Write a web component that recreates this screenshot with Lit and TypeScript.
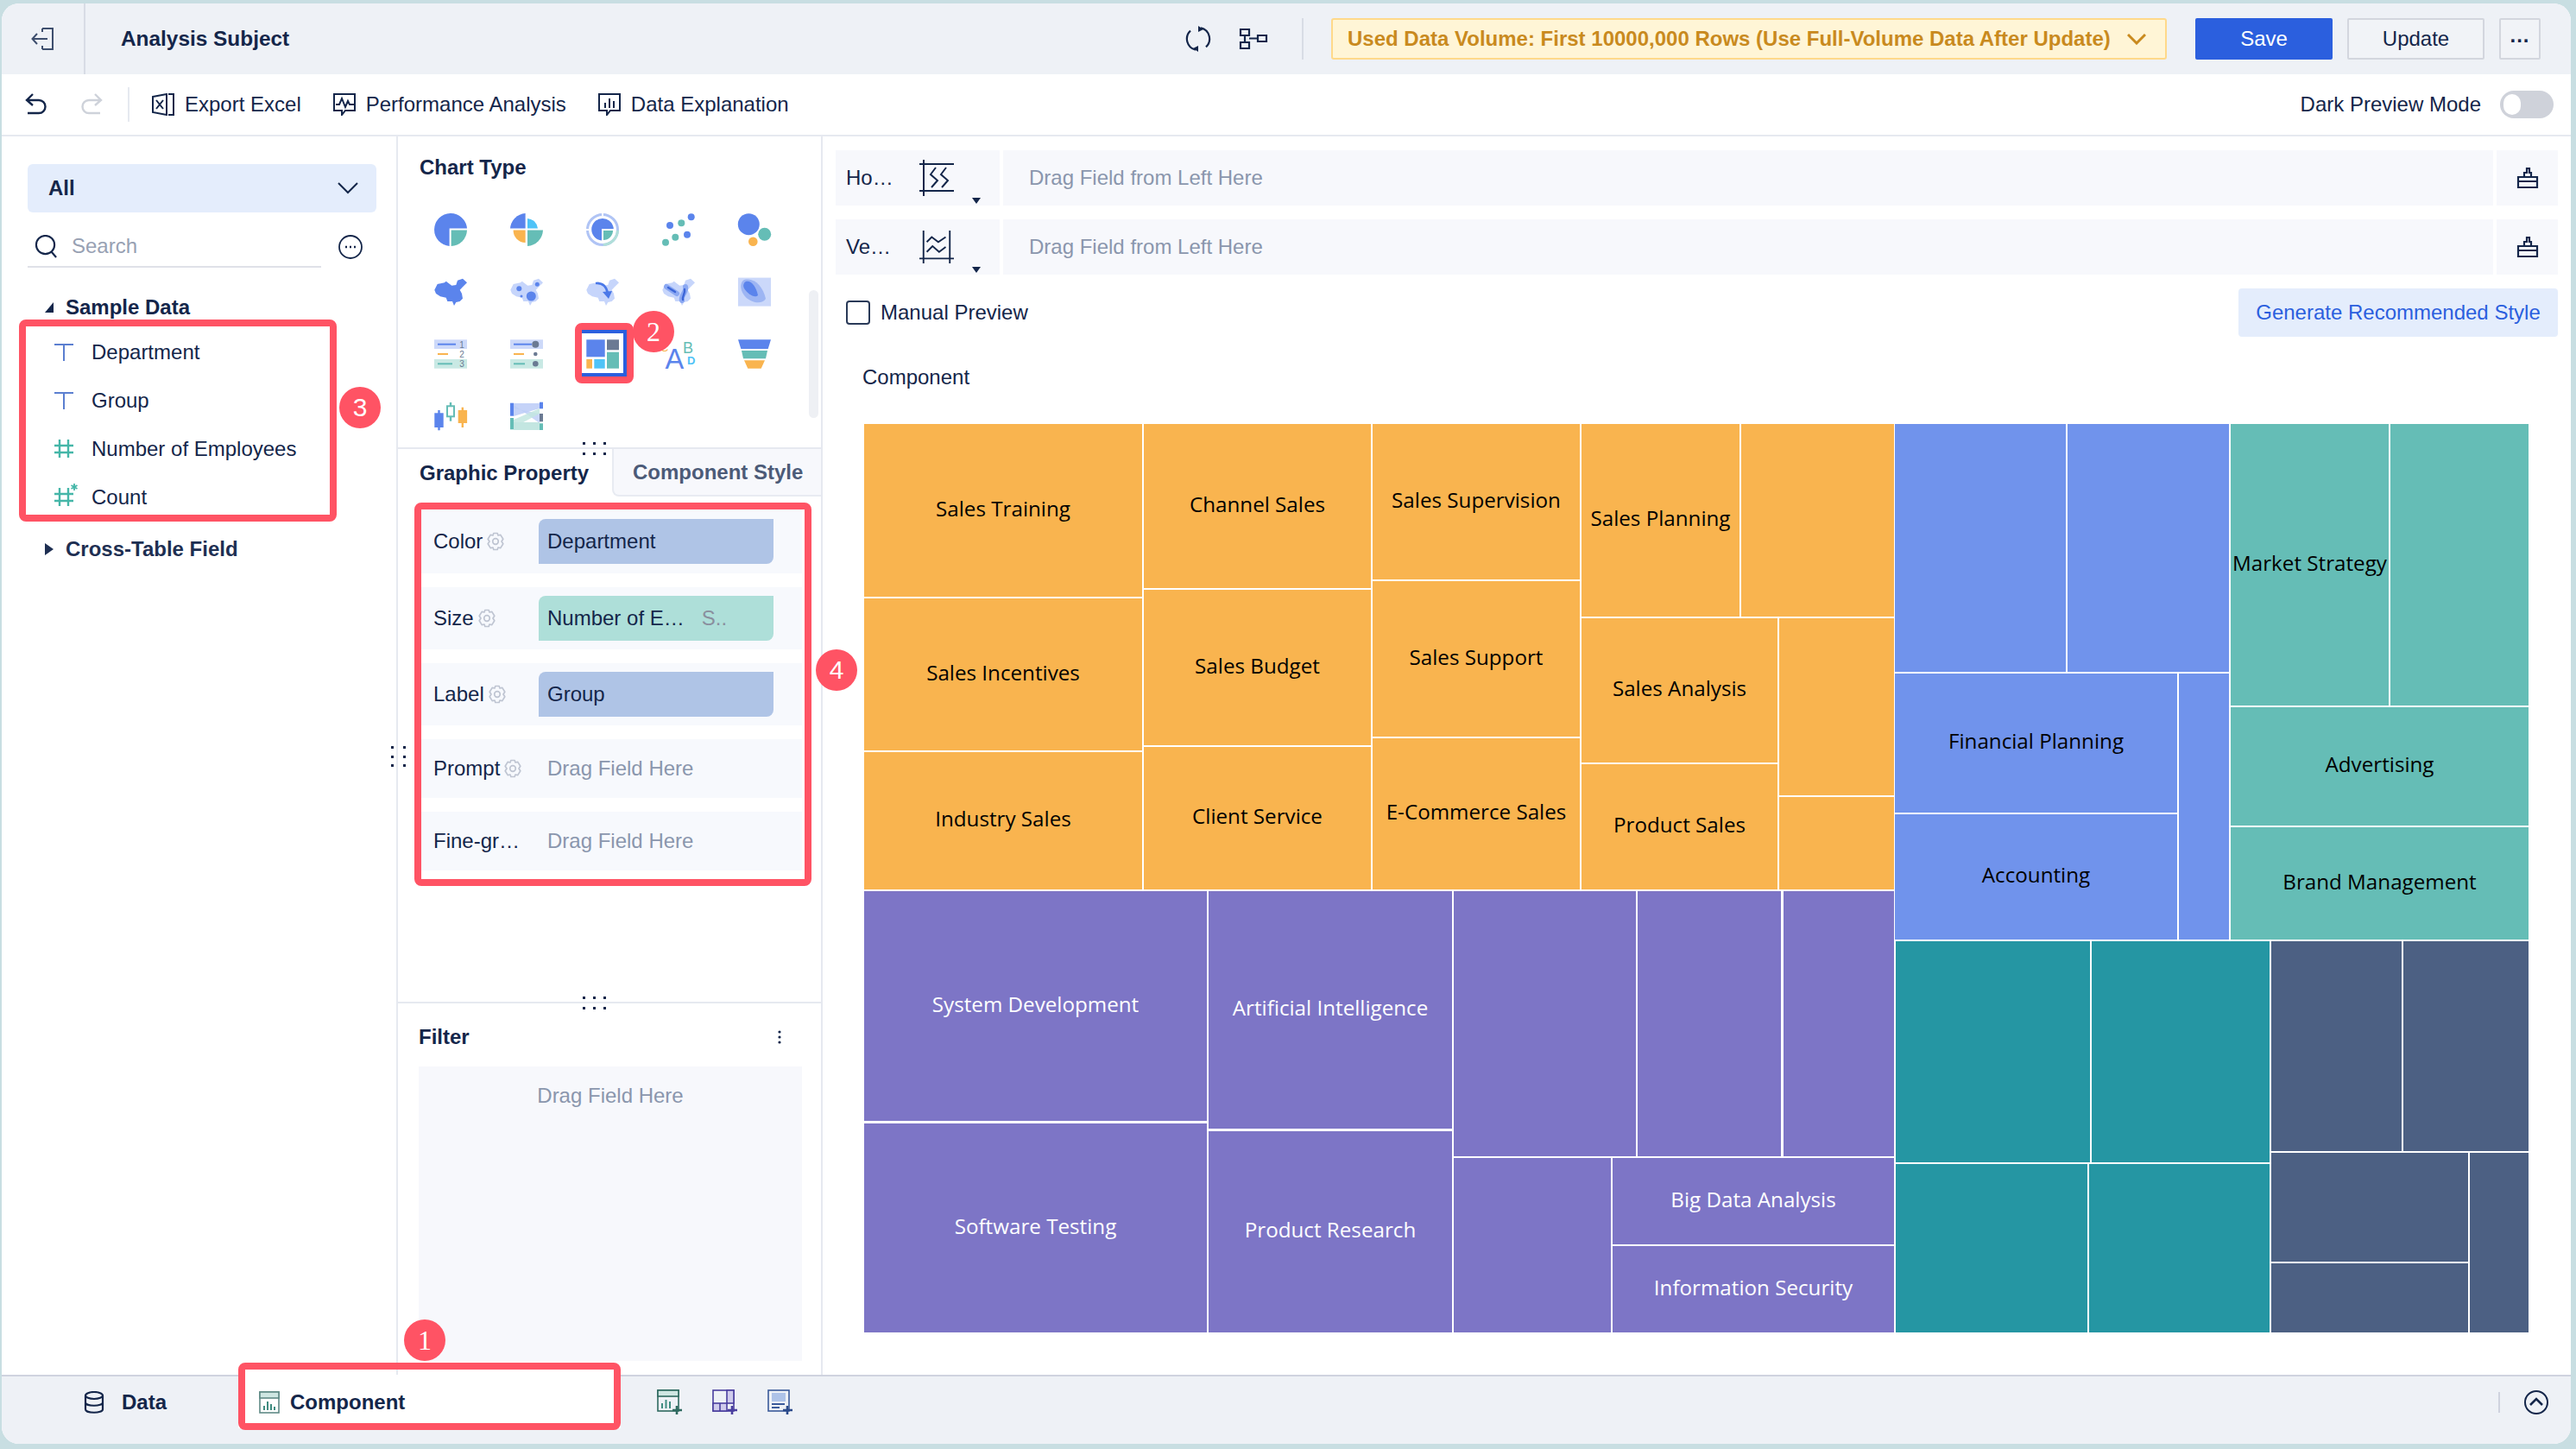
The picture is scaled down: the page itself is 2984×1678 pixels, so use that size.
import { LitElement, html, svg, css } from 'lit';
import { customElement } from 'lit/decorators.js';

type Cell = [number, number, number, number, string?];

const BLUE = '#5b84ec';
const GREEN = '#65bdb6';
const ORANGE = '#f9b44f';
const SKY = '#4fc3f7';
const PALE = '#c6d5fb';
const SLATE = '#6b7a93';
const CHINA =
  'M1.3 17.7 L4.7 11 13 9.3 14.7 7.7 21.3 12.7 26.3 12 28 6.7 34 4.7 39 9.3 34 14.3 30.7 17.7 33 22 34 27.7 30.7 31 26.3 32 24 36 22 31 16.3 31 14.7 26.7 8 25.3 3 22Z';

// x0, y0, x1, y1 in page pixels, the chart's viewBox uses the same numbers
const GROUPS: { fill: string; text: string; cells: Cell[] }[] = [
  {
    fill: '#f9b44f',
    text: '#000',
    cells: [
      [1001, 491, 1323, 691, 'Sales Training'],
      [1001, 693, 1323, 869, 'Sales Incentives'],
      [1001, 871, 1323, 1030, 'Industry Sales'],
      [1325, 491, 1588, 681, 'Channel Sales'],
      [1325, 683, 1588, 863, 'Sales Budget'],
      [1325, 865, 1588, 1030, 'Client Service'],
      [1590, 491, 1830, 671, 'Sales Supervision'],
      [1590, 673, 1830, 853, 'Sales Support'],
      [1590, 855, 1830, 1030, 'E-Commerce Sales'],
      [1832, 491, 2015, 714, 'Sales Planning'],
      [2017, 491, 2194, 714],
      [1832, 716, 2059, 883, 'Sales Analysis'],
      [1832, 885, 2059, 1030, 'Product Sales'],
      [2061, 716, 2194, 921],
      [2061, 923, 2194, 1030],
    ],
  },
  {
    fill: '#7d75c6',
    text: '#fff',
    cells: [
      [1001, 1032, 1398, 1298, 'System Development'],
      [1001, 1301, 1398, 1543, 'Software Testing'],
      [1400, 1032, 1682, 1307, 'Artificial Intelligence'],
      [1400, 1310, 1682, 1543, 'Product Research'],
      [1684, 1032, 1895, 1339],
      [1897, 1032, 2063, 1339],
      [2066, 1032, 2194, 1339],
      [1684, 1341, 1866, 1543],
      [1868, 1341, 2194, 1441, 'Big Data Analysis'],
      [1868, 1443, 2194, 1543, 'Information Security'],
    ],
  },
  {
    fill: '#7093ec',
    text: '#000',
    cells: [
      [2195, 491, 2393, 778],
      [2395, 491, 2582, 778],
      [2195, 780, 2522, 941, 'Financial Planning'],
      [2195, 943, 2522, 1088, 'Accounting'],
      [2524, 780, 2582, 1088],
    ],
  },
  {
    fill: '#65bdb6',
    text: '#000',
    cells: [
      [2584, 491, 2767, 817, 'Market Strategy'],
      [2769, 491, 2929, 817],
      [2584, 819, 2929, 956, 'Advertising'],
      [2584, 958, 2929, 1088, 'Brand Management'],
    ],
  },
  {
    fill: '#2596a3',
    text: '#fff',
    cells: [
      [2196, 1090, 2421, 1346],
      [2423, 1090, 2629, 1346],
      [2196, 1348, 2418, 1543],
      [2420, 1348, 2629, 1543],
    ],
  },
  {
    fill: '#4c6083',
    text: '#fff',
    cells: [
      [2631, 1090, 2782, 1333],
      [2784, 1090, 2929, 1333],
      [2631, 1335, 2859, 1461],
      [2631, 1463, 2859, 1543],
      [2861, 1335, 2929, 1543],
    ],
  },
];

const CHART_ICONS = [
  svg`<path d="M18.6 39 A19 19 0 1 1 39 18.6 H18.6Z" fill=${BLUE}/><path d="M20.6 20.6 H39 A19 19 0 0 1 20.6 39Z" fill=${GREEN}/>`,
  svg`<path d="M18.6 18.6 H1 A19 19 0 0 1 18.6 1Z" fill=${BLUE}/><path d="M21 18.6 V7 A13 13 0 0 1 33 18.6Z" fill=${SKY}/><path d="M18.6 20.6 V35 A14 14 0 0 1 4.6 20.6Z" fill=${ORANGE}/><path d="M21 20.6 H39 A19 19 0 0 1 21 39Z" fill=${GREEN}/>`,
  svg`<circle cx="20" cy="20" r="17.5" fill="none" stroke="#b0c4f5" stroke-width="3"/><path d="M20.8 37.5 A17.5 17.5 0 0 0 37.5 20.8" fill="none" stroke="#b0dfd9" stroke-width="3"/><path d="M19 1 h2 v3 h-2Z M1 19 h3 v2 h-3Z" fill="#fff"/><path d="M19 32.5 A12.8 12.8 0 1 1 32.8 19 H19Z" fill=${BLUE}/><path d="M21 21 H32 A11 11 0 0 1 21 32Z" fill=${GREEN}/>`,
  svg`<circle cx="34.7" cy="5.3" r="4" fill=${BLUE}/><circle cx="23.3" cy="12.3" r="4" fill=${GREEN}/><circle cx="10" cy="15" r="4" fill=${BLUE}/><circle cx="16.3" cy="28.7" r="4" fill=${GREEN}/><circle cx="30" cy="25.7" r="4" fill=${BLUE}/><circle cx="5" cy="34.7" r="4" fill=${GREEN}/>`,
  svg`<circle cx="13.3" cy="13.7" r="12.5" fill=${BLUE}/><circle cx="31.7" cy="25.3" r="7.5" fill=${GREEN}/><circle cx="18.3" cy="33.7" r="5.3" fill=${ORANGE}/>`,
  svg`<path d=${CHINA} fill=${BLUE}/>`,
  svg`<path d=${CHINA} fill=${PALE}/><circle cx="11.3" cy="16.3" r="3" fill=${BLUE}/><circle cx="32.3" cy="11.3" r="2.5" fill=${BLUE}/><circle cx="25.3" cy="25" r="5.5" fill=${BLUE}/><circle cx="14" cy="25" r="1.5" fill=${BLUE}/>`,
  svg`<path d=${CHINA} fill=${PALE}/><path d="M12 10 Q24 9 26 22" fill="none" stroke="#4a78e8" stroke-width="2.6"/><path d="M20 20 L27 28 L31 19Z" fill="#4a78e8"/>`,
  svg`<path d=${CHINA} fill=${PALE}/><path d="M6 14 L18 22 M28 14 C30 20 22 24 24 30" fill="none" stroke="#8ba8f2" stroke-width="6" stroke-linecap="round"/><path d="M8 15 L16 20 M27 17 C28 22 24 25 25 29" fill="none" stroke="#3c66d8" stroke-width="2.4" stroke-linecap="round"/>`,
  svg`<rect x="1" y="3.6" width="38" height="33" fill="#cbd8fa"/><path d="M8 6 C20 3 30 14 33 28 C28 36 14 32 8 24 C2 16 4 8 8 6Z" fill="#9db5f3"/><path d="M10 8 C16 6 22 14 24 24 C20 28 12 22 8 16 C6 12 8 9 10 8Z" fill=${BLUE}/>`,
  svg`<rect x="1" y="3.3" width="38" height="10.7" fill="#cdd9f9"/><rect x="1" y="26" width="38" height="10.7" fill="#c9e9e4"/><path d="M5 8.7 H26" stroke=${BLUE} stroke-width="2"/><path d="M5 20 H17" stroke=${ORANGE} stroke-width="2"/><path d="M5 31.3 H22" stroke=${GREEN} stroke-width="2"/><g fill=${SLATE} font-family="Liberation Sans, sans-serif" font-size="10" text-anchor="middle"><text x="33" y="12.5">1</text><text x="33" y="23.8">2</text><text x="33" y="35">3</text></g>`,
  svg`<rect x="1" y="3.3" width="38" height="10.7" fill="#cdd9f9"/><rect x="1" y="26" width="38" height="10.7" fill="#c9e9e4"/><path d="M5 8.7 H26" stroke=${BLUE} stroke-width="2"/><path d="M5 20 H17" stroke=${ORANGE} stroke-width="2"/><path d="M5 31.3 H18" stroke=${GREEN} stroke-width="2"/><circle cx="30.3" cy="8.7" r="4" fill=${SLATE}/><circle cx="30.3" cy="20" r="2.3" fill=${SLATE}/><circle cx="30.3" cy="31.3" r="3.3" fill=${SLATE}/>`,
  svg`<rect x="1.3" y="3.3" width="21.4" height="20" fill=${BLUE}/><rect x="25" y="3.3" width="14" height="12" fill=${SLATE}/><rect x="25" y="17.7" width="14" height="19" fill=${GREEN}/><rect x="1.3" y="26" width="6.7" height="10.7" fill=${ORANGE}/><rect x="10.3" y="26" width="12.4" height="10.7" fill=${SKY}/>`,
  svg`<g font-family="Liberation Sans, sans-serif"><text x="-1" y="17" font-size="13" fill=${ORANGE}>C</text><text x="4.5" y="36.7" font-size="32.5" fill=${BLUE}>A</text><text x="25" y="18.5" font-size="18" fill=${GREEN}>B</text><text x="30" y="32" font-size="13" font-weight="700" fill=${SKY}>D</text></g>`,
  svg`<path d="M1 3.3 H39 L35.7 14 H4.3Z" fill=${BLUE}/><path d="M5 16 H35 L33 25.3 H7Z" fill=${GREEN}/><path d="M8 27.3 H32 L27.7 36.7 H12.3Z" fill=${ORANGE}/>`,
  svg`<path d="M6.5 13 V36.3" stroke=${BLUE} stroke-width="2.4"/><rect x="1.3" y="16.3" width="10.4" height="16.7" fill=${BLUE}/><path d="M20 4 V25.7" stroke=${GREEN} stroke-width="2.4"/><rect x="16" y="8.3" width="8" height="12" fill="#fff" stroke=${GREEN} stroke-width="2"/><path d="M33.8 9.7 V33" stroke=${ORANGE} stroke-width="2.4"/><rect x="28.7" y="13" width="10.4" height="15" fill=${ORANGE}/>`,
  svg`<path d="M5 5 H35 V11 L5 20Z" fill="#c5d3f8"/><path d="M5 7 L35 28 V17 L5 11Z" fill="#bccdf6" opacity=".8"/><path d="M5 24 L35 11 V17 L5 33Z" fill="#c3e6e1" opacity=".85"/><path d="M5 27 H35 V36 H5Z" fill="#c3e6e1"/><rect x="1" y="4.7" width="4" height="15" fill=${BLUE}/><rect x="1" y="22" width="4" height="13.3" fill=${GREEN}/><rect x="35" y="3.7" width="4" height="7.6" fill=${BLUE}/><rect x="35" y="17" width="4" height="9.3" fill=${SLATE}/><rect x="35" y="28.3" width="4" height="7.7" fill=${GREEN}/>`,
];

const gear = html`<svg class="gear" viewBox="0 0 20 22" width="20" height="22" fill="none" stroke="#bfc5d2" stroke-width="1.7" stroke-linejoin="round">
  <path d="M7.800 1.500 H12.200 L13 4 L15.800 3.400 L18.800 8.200 L17 11 L18.800 13.800 L15.800 18.600 L13 18 L12.200 20.500 H7.800 L7 18 L4.200 18.600 L1.200 13.800 L3 11 L1.200 8.200 L4.200 3.400 L7 4Z"/>
  <circle cx="10" cy="11" r="3.300"/>
</svg>`;

const slotIcon = html`<svg class="slot-end" viewBox="0 0 26 26" width="26" height="26" fill="none" stroke="#14264a" stroke-width="2.2">
  <path d="M2 12 H24 V24 H2Z M2 17 H24 M9 12 V7 H12 V2 H15 V7 H17 V12"/>
</svg>`;

@customElement('app-root')
export class AppRoot extends LitElement {
  static styles = css`
    :host {
      display: block;
      font-family: 'Liberation Sans', Arial, sans-serif;
      font-size: 24px;
      color: #14264a;
    }

    .page {
      position: relative;
      width: 2984px;
      height: 1678px;
      padding: 4px 6px 6px 2px;
      box-sizing: border-box;
      background: #c8dee2;
      overflow: hidden;
    }

    .window {
      display: flex;
      flex-direction: column;
      height: 100%;
      background: #fff;
      border-radius: 20px;
      overflow: hidden;
    }

    svg {
      display: block;
      flex: none;
    }

    /* title bar */
    .titlebar {
      display: flex;
      align-items: center;
      height: 82px;
      flex: none;
      padding-right: 35px;
      background: #eef1f6;
    }

    .back {
      display: flex;
      align-items: center;
      justify-content: center;
      align-self: stretch;
      width: 97px;
      margin-right: 41px;
      padding-right: 1px;
      box-sizing: border-box;
      border-right: 2px solid #d8dce5;
    }

    .title {
      flex: 1;
      font-size: 24.4px;
      font-weight: 700;
    }

    .title-icons {
      display: flex;
      align-items: center;
      gap: 32px;
    }

    .vsep {
      width: 2px;
      height: 48px;
      margin: 0 32px 0 39px;
      background: #d8dce5;
    }

    .volume {
      display: flex;
      align-items: center;
      justify-content: space-between;
      width: 968px;
      height: 48px;
      padding: 0 22px 0 17px;
      box-sizing: border-box;
      margin-right: 33px;
      border: 2px solid #ffd98a;
      border-radius: 3px;
      background: #fff5d6;
      color: #c98a1e;
      font-weight: 700;
      white-space: nowrap;
    }

    .btn {
      display: flex;
      align-items: center;
      justify-content: center;
      width: 159px;
      height: 48px;
      box-sizing: border-box;
      border: 2px solid #d3d6de;
      border-radius: 2px;
      background: #f1f3f7;
    }

    .btn.primary {
      border-color: #2b5fde;
      background: #2b5fde;
      color: #fff;
      margin-right: 17px;
    }

    .btn.more {
      width: 48px;
      margin-left: 17px;
      letter-spacing: 1px;
      font-weight: 700;
      padding-bottom: 8px;
    }

    /* toolbar */
    .toolbar {
      display: flex;
      align-items: center;
      height: 70px;
      flex: none;
      padding: 0 20px 0 27px;
      border-bottom: 2px solid #e6e9f0;
    }

    .hist {
      display: flex;
      gap: 40px;
      padding-right: 29px;
      margin-right: 26px;
      height: 40px;
      align-items: center;
      border-right: 2px solid #e6e9f0;
    }

    .tool {
      display: flex;
      align-items: center;
      gap: 12px;
      margin-right: 37px;
    }

    .spacer {
      flex: 1;
    }

    .toggle {
      width: 62px;
      height: 32px;
      margin-left: 22px;
      padding: 4px;
      box-sizing: border-box;
      border-radius: 16px;
      background: #cfd2da;
    }

    .toggle i {
      display: block;
      width: 20px;
      height: 24px;
      border-radius: 12px;
      background: #fff;
    }

    /* panels */
    .body {
      display: flex;
      flex: 1;
      min-height: 0;
    }

    .fields {
      width: 459px;
      flex: none;
      padding: 32px 0 0 30px;
      box-sizing: border-box;
      border-right: 2px solid #e6e9f0;
    }

    .select {
      display: flex;
      align-items: center;
      justify-content: space-between;
      width: 404px;
      height: 56px;
      padding: 0 21px 0 24px;
      box-sizing: border-box;
      border-radius: 6px;
      background: #e4edfc;
      font-weight: 700;
    }

    .search-row {
      display: flex;
      align-items: center;
      gap: 20px;
      margin-top: 22px;
    }

    .search-row > svg {
      margin-top: -6px;
    }

    .search {
      display: flex;
      align-items: center;
      gap: 16px;
      width: 340px;
      height: 42px;
      padding: 0 0 6px 8px;
      box-sizing: border-box;
      border-bottom: 2px solid #dfe1e8;
      color: #98a1b3;
    }

    .group {
      display: flex;
      align-items: center;
      height: 28px;
      margin-top: 32px;
      margin-left: 20px;
      gap: 14px;
      font-weight: 700;
    }

    .group.closed {
      margin-top: 18px;
      color: #1e2f52;
    }

    .field {
      display: flex;
      align-items: center;
      height: 55.9px;
      margin-left: 31px;
      gap: 21px;
    }

    .field-list {
      margin-top: 10px;
    }

    .config {
      display: flex;
      flex-direction: column;
      width: 492px;
      flex: none;
      box-sizing: border-box;
      border-right: 2px solid #e6e9f0;
    }

    .types {
      position: relative;
      height: 362px;
      flex: none;
      padding: 22px 0 0 17px;
      box-sizing: border-box;
      border-bottom: 2px solid #e6e9f0;
    }

    .types h3 {
      margin: 0 0 22px 8px;
      height: 28px;
      line-height: 28px;
      font-size: 24px;
    }

    .type-grid {
      display: grid;
      grid-template-columns: repeat(5, 88px);
      grid-auto-rows: 72px;
      place-items: center;
    }

    .scroll {
      position: absolute;
      top: 178px;
      right: 3px;
      width: 11px;
      height: 148px;
      border-radius: 6px;
      background: #eef0f4;
    }

    .tabs {
      display: flex;
      height: 55px;
      flex: none;
    }

    .tab {
      display: flex;
      align-items: center;
      padding-left: 25px;
      width: 248px;
      box-sizing: border-box;
      font-weight: 700;
    }

    .tab.off {
      flex: 1;
      padding-left: 22px;
      background: #f7f8fc;
      border: 2px solid #e8ebf2;
      border-width: 0 0 2px 2px;
      border-bottom-left-radius: 8px;
      color: #4c5b78;
    }

    .props {
      display: flex;
      flex-direction: column;
      flex: 1;
      gap: 16px;
      padding: 15px 22px 0 27px;
      border-bottom: 2px solid #e6e9f0;
    }

    .prop {
      display: flex;
      align-items: center;
      height: 72px;
      flex: none;
      padding-left: 14px;
      background: #f7f9fd;
    }

    .prop.first {
      height: 74px;
    }

    .prop.slim {
      height: 68px;
    }

    .prop-name {
      display: flex;
      align-items: center;
      gap: 5px;
      width: 122px;
      flex: none;
    }

    .chip {
      display: flex;
      align-items: center;
      width: 272px;
      height: 52px;
      padding-left: 10px;
      box-sizing: border-box;
      border-radius: 8px 0 8px 0;
      background: #afc4e6;
    }

    .chip.num {
      background: #aedfd9;
    }

    .chip em {
      margin-left: 20px;
      font-style: normal;
      color: #8a8f9e;
    }

    .placeholder {
      color: #8a96ad;
    }

    .empty {
      padding-left: 10px;
    }

    .filter {
      height: 430px;
      flex: none;
      padding: 25px 0 0 24px;
      box-sizing: border-box;
    }

    .filter-head {
      display: flex;
      align-items: center;
      justify-content: space-between;
      height: 28px;
      padding-right: 46px;
      font-weight: 700;
    }

    .filter-box {
      width: 444px;
      height: 341px;
      margin-top: 20px;
      padding-top: 20px;
      box-sizing: border-box;
      background: #f7f8fc;
      text-align: center;
      color: #8a96ad;
    }

    .canvas {
      flex: 1;
      min-width: 0;
      padding: 16px 15px 0 15px;
    }

    .slot {
      display: flex;
      align-items: stretch;
      height: 64px;
      margin-bottom: 16px;
      background: #f7f8fc;
    }

    .axis {
      display: flex;
      align-items: center;
      width: 194px;
      padding-left: 12px;
      box-sizing: border-box;
      border-right: 4px solid #fff;
      position: relative;
      flex: none;
    }

    .axis span {
      width: 85px;
    }

    .axis u {
      position: absolute;
      right: 22px;
      bottom: 2px;
      border: 5px solid transparent;
      border-top: 7px solid #14264a;
      border-bottom: 0;
    }

    .slot-text {
      display: flex;
      align-items: center;
      flex: 1;
      padding-left: 30px;
      color: #8a96ad;
      border-right: 4px solid #fff;
    }

    .slot-tail {
      display: flex;
      align-items: center;
      justify-content: center;
      width: 71px;
      flex: none;
    }

    .manual {
      display: flex;
      align-items: center;
      justify-content: space-between;
      height: 56px;
      padding-left: 12px;
    }

    .check {
      display: flex;
      align-items: center;
      gap: 12px;
    }

    .check i {
      width: 28px;
      height: 28px;
      box-sizing: border-box;
      border: 2px solid #2a3a58;
      border-radius: 4px;
    }

    .recommend {
      display: flex;
      align-items: center;
      justify-content: center;
      width: 370px;
      height: 56px;
      border-radius: 4px;
      background: #e4edfc;
      color: #2b5fde;
    }

    .comp-title {
      height: 28px;
      line-height: 28px;
      margin: 33px 0 40px 31px;
    }

    .treemap {
      margin-left: 33px;
    }

    .treemap text {
      font-family: 'Open Sans', 'Noto Sans', sans-serif;
      font-size: 24.2px;
      text-anchor: middle;
      dominant-baseline: central;
    }

    /* bottom tab bar */
    .dock {
      display: flex;
      align-items: flex-start;
      height: 80px;
      flex: none;
      padding-right: 26px;
      box-sizing: border-box;
      border-top: 2px solid #cfd3df;
      background: #eef1f6;
    }

    .dock-tab {
      display: flex;
      align-items: center;
      gap: 20px;
      width: 274px;
      height: 60px;
      padding-left: 95px;
      box-sizing: border-box;
      font-weight: 700;
    }

    .dock-tab.on {
      width: 443px;
      height: 62px;
      margin-top: -2px;
      padding: 2px 0 0 24px;
      gap: 12px;
      background: #fff;
      margin-right: 42px;
    }

    .dock-adds {
      display: flex;
      gap: 34px;
      margin-top: 15px;
    }

    .dock-right {
      display: flex;
      align-items: center;
      gap: 28px;
      margin-left: auto;
      height: 60px;
    }

    .dock-right i {
      width: 2px;
      height: 24px;
      background: #cfd3df;
    }

    /* annotations drawn over the screen */
    .mark {
      position: absolute;
      box-sizing: border-box;
      border: 8px solid #ff5364;
      border-radius: 8px;
    }

    .mark-tab {
      left: 276px;
      top: 1578px;
      width: 443px;
      height: 78px;
    }

    .mark-type {
      left: 666px;
      top: 374px;
      width: 68px;
      height: 70px;
    }

    .mark-type i {
      display: block;
      height: 100%;
      box-sizing: border-box;
      border: 4px solid #2b5fde;
      border-left: 0;
    }

    .mark-fields {
      left: 22px;
      top: 370px;
      width: 368px;
      height: 234px;
    }

    .mark-props {
      left: 480px;
      top: 582px;
      width: 460px;
      height: 444px;
    }

    .badge {
      position: absolute;
      display: flex;
      align-items: center;
      justify-content: center;
      width: 48px;
      height: 48px;
      border-radius: 50%;
      background: #ff5364;
      color: #fff;
      font-size: 30px;
    }

    .badge.serif {
      font-family: 'Liberation Serif', serif;
      font-size: 32px;
    }

    .b1 {
      left: 468px;
      top: 1528px;
    }

    .b2 {
      left: 733px;
      top: 360px;
    }

    .b3 {
      left: 393px;
      top: 448px;
    }

    .b4 {
      left: 945px;
      top: 752px;
    }

    .dots {
      position: absolute;
      display: grid;
      grid-template-columns: repeat(3, 3px);
      grid-auto-rows: 3px;
      column-gap: 9px;
      row-gap: 9px;
    }

    .dots i {
      background: #14264a;
    }

    .dots.wide {
      left: 675px;
      top: 512px;
    }

    .dots.low {
      left: 675px;
      top: 1154px;
    }

    .dots.side {
      left: 453px;
      top: 864px;
      grid-template-columns: repeat(2, 3px);
      column-gap: 11px;
      row-gap: 7.5px;
    }
  `;

  private dots(n: number) {
    return Array.from({ length: n }, () => html`<i></i>`);
  }

  private fieldIcon(kind: string) {
    if (kind === 'text') {
      return html`<svg viewBox="0 0 22 22" width="22" height="22" fill="none" stroke="#5b7fd0" stroke-width="2"><path d="M0 2 H22 M11 2 V21"/></svg>`;
    }
    return html`<svg viewBox="0 0 22 22" width="22" height="22" fill="none" stroke="#45b6a8" stroke-width="2.4" style="overflow:visible">
      <path d="M0 7 H22 M0 15 H22 M6 0 V21 M16 0 V21"/>
      ${kind === 'calc' ? svg`<path d="M23 -5 V3 M19.5 -3 L26.5 1 M26.5 -3 L19.5 1" stroke-width="1.8"/>` : ''}
    </svg>`;
  }

  private renderTitlebar() {
    return html`
      <div class="titlebar">
        <div class="back">
          <svg viewBox="0 0 26 26" width="26" height="26" fill="none" stroke="#3e4f6e" stroke-width="2">
            <path d="M13 1 H25 V25 H13 M13 1 V5 M13 25 V21 M19 13 H2 M7 7 L1.5 13 L7 19"/>
          </svg>
        </div>
        <div class="title">Analysis Subject</div>
        <div class="title-icons">
          <svg viewBox="0 0 30 30" width="30" height="30" fill="none" stroke="#14264a" stroke-width="2.2">
            <path d="M18 2.300 A13 13 0 0 1 24 24.400 M12 27.700 A13 13 0 0 1 6 5.600"/>
            <path d="M15 0 L21 4 L15 7Z M15 30 L9 26 L15 23Z" fill="#14264a" stroke="none"/>
          </svg>
          <svg viewBox="0 0 34 26" width="34" height="26" fill="none" stroke="#14264a" stroke-width="2.2">
            <path d="M2 2 H12 V9 H2Z M2 17 H12 V24 H2Z M22 9 H32 V16 H22Z M7 9 V17 M12 12.5 H22"/>
          </svg>
        </div>
        <div class="vsep"></div>
        <div class="volume">
          <span>Used Data Volume: First 10000,000 Rows (Use Full-Volume Data After Update)</span>
          <svg viewBox="0 0 22 14" width="22" height="14" fill="none" stroke="#c98a1e" stroke-width="3"><path d="M1 2 L11 12 L21 2"/></svg>
        </div>
        <div class="btn primary">Save</div>
        <div class="btn">Update</div>
        <div class="btn more">...</div>
      </div>
    `;
  }

  private renderToolbar() {
    return html`
      <div class="toolbar">
        <div class="hist">
          <svg viewBox="0 0 25 26" width="25" height="26" fill="none" stroke="#14264a" stroke-width="2.4">
            <path d="M9 1 L2 8 L9 14 M2 8 H16 A7.5 7.5 0 0 1 16 23 H3"/>
          </svg>
          <svg viewBox="0 0 25 26" width="25" height="26" fill="none" stroke="#ced2da" stroke-width="2.4">
            <path d="M16 1 L23 8 L16 14 M23 8 H9 A7.5 7.5 0 0 0 9 23 H22"/>
          </svg>
        </div>
        <div class="tool">
          <svg viewBox="0 0 26 26" width="26" height="26" fill="none" stroke="#14264a" stroke-width="2">
            <path d="M19 1 H25 V25 H19 M1 4 L17 1 V25 L1 22Z M5 8 L13 18 M13 8 L5 18"/>
          </svg>
          Export Excel
        </div>
        <div class="tool">
          <svg viewBox="0 0 26 26" width="26" height="26" fill="none" stroke="#14264a" stroke-width="2">
            <path d="M1 1 H25 V20 H14 L10 25 V20 H1Z M3 13 H7 L10 6 L14 16 L17 9 L19 13 H24"/>
          </svg>
          Performance Analysis
        </div>
        <div class="tool">
          <svg viewBox="0 0 26 26" width="26" height="26" fill="none" stroke="#14264a" stroke-width="2">
            <path d="M1 1 H25 V20 H14 L10 25 V20 H1Z M8 11 V17 M13 6 V17 M18 9 V17"/>
          </svg>
          Data Explanation
        </div>
        <div class="spacer"></div>
        <span>Dark Preview Mode</span>
        <div class="toggle"><i></i></div>
      </div>
    `;
  }

  private renderFields() {
    const fields = [
      ['text', 'Department'],
      ['text', 'Group'],
      ['num', 'Number of Employees'],
      ['calc', 'Count'],
    ];
    return html`
      <div class="fields">
        <div class="select">
          All
          <svg viewBox="0 0 24 14" width="24" height="14" fill="none" stroke="#14264a" stroke-width="2"><path d="M1 1 L12 12 L23 1"/></svg>
        </div>
        <div class="search-row">
          <div class="search">
            <svg viewBox="0 0 28 28" width="27" height="27" fill="none" stroke="#14264a" stroke-width="2.2">
              <circle cx="13" cy="12" r="11"/><path d="M20 20 L26 27"/>
            </svg>
            Search
          </div>
          <svg viewBox="0 0 28 28" width="28" height="28" fill="none" stroke="#14264a" stroke-width="1.8">
            <circle cx="14" cy="14" r="13"/>
            <path d="M8 14 h2 M13 14 h2 M18 14 h2" stroke-width="2.4"/>
          </svg>
        </div>
        <div class="group">
          <svg viewBox="0 0 10 12" width="10" height="12"><path d="M10 0 V12 H0Z" fill="#14264a"/></svg>
          Sample Data
        </div>
        <div class="field-list">
          ${fields.map(([kind, name]) => html`<div class="field">${this.fieldIcon(kind)}${name}</div>`)}
        </div>
        <div class="group closed">
          <svg viewBox="0 0 10 14" width="10" height="14"><path d="M0 0 L10 7 L0 14Z" fill="#1e2f52"/></svg>
          Cross-Table Field
        </div>
      </div>
    `;
  }

  private renderConfig() {
    return html`
      <div class="config">
        <div class="types">
          <h3>Chart Type</h3>
          <div class="type-grid">
            ${CHART_ICONS.map(
              (icon) => html`<svg viewBox="0 0 40 40" width="40" height="40" style="overflow:visible">${icon}</svg>`,
            )}
          </div>
          <div class="scroll"></div>
        </div>
        <div class="tabs">
          <div class="tab">Graphic Property</div>
          <div class="tab off">Component Style</div>
        </div>
        <div class="props">
          <div class="prop first">
            <div class="prop-name">Color ${gear}</div>
            <div class="chip">Department</div>
          </div>
          <div class="prop">
            <div class="prop-name">Size ${gear}</div>
            <div class="chip num">Number of E…<em>S..</em></div>
          </div>
          <div class="prop">
            <div class="prop-name">Label ${gear}</div>
            <div class="chip">Group</div>
          </div>
          <div class="prop slim">
            <div class="prop-name">Prompt ${gear}</div>
            <div class="placeholder empty">Drag Field Here</div>
          </div>
          <div class="prop slim">
            <div class="prop-name">Fine-gr…</div>
            <div class="placeholder empty">Drag Field Here</div>
          </div>
        </div>
        <div class="filter">
          <div class="filter-head">
            Filter
            <svg viewBox="0 0 4 16" width="4" height="16" fill="#14264a"><circle cx="2" cy="2" r="1.6"/><circle cx="2" cy="8" r="1.6"/><circle cx="2" cy="14" r="1.6"/></svg>
          </div>
          <div class="filter-box">Drag Field Here</div>
        </div>
      </div>
    `;
  }

  private renderTreemap() {
    return html`
      <svg class="treemap" viewBox="1001 491 1928 1052" width="1928" height="1052" shape-rendering="crispEdges">
        ${GROUPS.map((g) =>
          g.cells.map(
            ([x0, y0, x1, y1, label]) => svg`
              <rect x=${x0} y=${y0} width=${x1 - x0} height=${y1 - y0} fill=${g.fill}/>
              ${label ? svg`<text x=${(x0 + x1) / 2} y=${(y0 + y1) / 2 - 3} fill=${g.text} shape-rendering="auto">${label}</text>` : ''}
            `,
          ),
        )}
      </svg>
    `;
  }

  private renderCanvas() {
    return html`
      <div class="canvas">
        <div class="slot">
          <div class="axis">
            <span>Ho…</span>
            <svg viewBox="0 0 40 42" width="40" height="42" fill="none" stroke="#14264a" stroke-width="2">
              <path d="M0 5 H40 M0 36 H40 M5 0 V42 M19 9 L13 17 L21 24 L14 32 M31 9 L25 17 L33 24 L26 32"/>
            </svg>
            <u></u>
          </div>
          <div class="slot-text">Drag Field from Left Here</div>
          <div class="slot-tail">${slotIcon}</div>
        </div>
        <div class="slot">
          <div class="axis">
            <span>Ve…</span>
            <svg viewBox="0 0 42 40" width="40" height="40" fill="none" stroke="#14264a" stroke-width="2">
              <path d="M5 0 V40 M37 0 V40 M0 34 H42 M9 14 L15 8 L23 14 L32 8 M9 26 L16 19 L24 26 L32 20"/>
            </svg>
            <u></u>
          </div>
          <div class="slot-text">Drag Field from Left Here</div>
          <div class="slot-tail">${slotIcon}</div>
        </div>
        <div class="manual">
          <div class="check"><i></i>Manual Preview</div>
          <div class="recommend">Generate Recommended Style</div>
        </div>
        <div class="comp-title">Component</div>
        ${this.renderTreemap()}
      </div>
    `;
  }

  private renderDock() {
    return html`
      <div class="dock">
        <div class="dock-tab">
          <svg viewBox="0 0 24 26" width="24" height="26" fill="none" stroke="#14264a" stroke-width="2.2">
            <ellipse cx="12" cy="5" rx="10" ry="4"/>
            <path d="M2 5 V21 C2 26 22 26 22 21 V5 M2 13 C2 18 22 18 22 13"/>
          </svg>
          Data
        </div>
        <div class="dock-tab on">
          <svg viewBox="0 0 24 26" width="24" height="26">
            <rect x="1" y="1" width="22" height="24" fill="#fff" stroke="#5f8a86" stroke-width="1.6"/>
            <rect x="1" y="1" width="22" height="7" fill="#cfe6e2" stroke="#5f8a86" stroke-width="1.6"/>
            <path d="M6 22 V17 M10 22 V12 M14 22 V15 M18 22 V18" stroke="#3f8c80" stroke-width="2"/>
          </svg>
          Component
        </div>
        <div class="dock-adds">
          <svg viewBox="0 0 30 30" width="30" height="30" fill="none">
            <rect x="1" y="1" width="24" height="24" stroke="#2f6a60" stroke-width="1.6"/>
            <rect x="1" y="1" width="24" height="7" fill="#cfe6e2" stroke="#2f6a60" stroke-width="1.6"/>
            <path d="M6 22 V16 M10.500 22 V12 M15 22 V14" stroke="#3f8c80" stroke-width="2"/>
            <path d="M23 19 V29 M18 24 H29" stroke="#2f6a60" stroke-width="2.6"/>
          </svg>
          <svg viewBox="0 0 30 30" width="30" height="30" fill="none" stroke="#4a3f9f" stroke-width="1.6">
            <rect x="1" y="1" width="24" height="24"/>
            <rect x="17" y="1" width="8" height="15" fill="#cfcbec"/>
            <rect x="1" y="16" width="16" height="9" fill="#cfcbec"/>
            <path d="M9 16 V25"/>
            <path d="M23 19 V29 M18 24 H29" stroke-width="2.6"/>
          </svg>
          <svg viewBox="0 0 30 30" width="30" height="30" fill="none">
            <rect x="1" y="1" width="24" height="24" stroke="#3a5a9a" stroke-width="1.6"/>
            <rect x="5" y="4" width="16" height="10" fill="#aec3e8"/>
            <path d="M5 17 H20 M5 21 H14" stroke="#3a5a9a" stroke-width="2"/>
            <path d="M23 19 V29 M18 24 H29" stroke="#2b4a8a" stroke-width="2.6"/>
          </svg>
        </div>
        <div class="dock-right">
          <i></i>
          <svg viewBox="0 0 28 28" width="28" height="28" fill="none" stroke="#14264a" stroke-width="2">
            <circle cx="14" cy="14" r="13"/>
            <path d="M7 17 L14 10 L21 17" stroke-width="2.6"/>
          </svg>
        </div>
      </div>
    `;
  }

  render() {
    return html`
      <div class="page">
        <div class="window">
          ${this.renderTitlebar()} ${this.renderToolbar()}
          <div class="body">${this.renderFields()} ${this.renderConfig()} ${this.renderCanvas()}</div>
          ${this.renderDock()}
        </div>
        <div class="dots wide">${this.dots(6)}</div>
        <div class="dots low">${this.dots(6)}</div>
        <div class="dots side">${this.dots(6)}</div>
        <div class="mark mark-tab"></div>
        <div class="mark mark-type"><i></i></div>
        <div class="mark mark-fields"></div>
        <div class="mark mark-props"></div>
        <div class="badge serif b1">1</div>
        <div class="badge serif b2">2</div>
        <div class="badge b3">3</div>
        <div class="badge b4">4</div>
      </div>
    `;
  }
}

declare global {
  interface HTMLElementTagNameMap {
    'app-root': AppRoot;
  }
}
